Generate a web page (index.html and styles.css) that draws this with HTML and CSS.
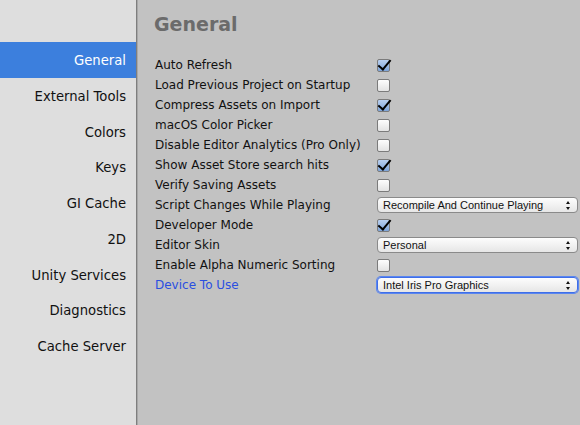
FILE: index.html
```html
<!DOCTYPE html>
<html>
<head>
<meta charset="utf-8">
<link rel="stylesheet" href="styles.css">
</head>
<body>
<div class="window">
  <nav class="sidebar">
    <div class="nav-item selected">General</div>
    <div class="nav-item">External Tools</div>
    <div class="nav-item">Colors</div>
    <div class="nav-item">Keys</div>
    <div class="nav-item">GI Cache</div>
    <div class="nav-item">2D</div>
    <div class="nav-item">Unity Services</div>
    <div class="nav-item">Diagnostics</div>
    <div class="nav-item">Cache Server</div>
  </nav>
  <main class="content">
    <h1 class="title">General</h1>
    <div class="rows">
      <div class="row"><span class="label">Auto Refresh</span><span class="cb checked"></span></div>
      <div class="row"><span class="label">Load Previous Project on Startup</span><span class="cb"></span></div>
      <div class="row"><span class="label">Compress Assets on Import</span><span class="cb checked"></span></div>
      <div class="row"><span class="label">macOS Color Picker</span><span class="cb"></span></div>
      <div class="row"><span class="label">Disable Editor Analytics (Pro Only)</span><span class="cb"></span></div>
      <div class="row"><span class="label">Show Asset Store search hits</span><span class="cb checked"></span></div>
      <div class="row"><span class="label">Verify Saving Assets</span><span class="cb"></span></div>
      <div class="row"><span class="label">Script Changes While Playing</span><span class="dd"><span class="dd-text">Recompile And Continue Playing</span><span class="dd-arrow"></span></span></div>
      <div class="row"><span class="label">Developer Mode</span><span class="cb checked"></span></div>
      <div class="row"><span class="label">Editor Skin</span><span class="dd"><span class="dd-text">Personal</span><span class="dd-arrow"></span></span></div>
      <div class="row"><span class="label">Enable Alpha Numeric Sorting</span><span class="cb"></span></div>
      <div class="row"><span class="label focus">Device To Use</span><span class="dd focused"><span class="dd-text">Intel Iris Pro Graphics</span><span class="dd-arrow"></span></span></div>
    </div>
  </main>
</div>
</body>
</html>
```
FILE: styles.css
```css
html, body {
  margin: 0;
  padding: 0;
}
body {
  font-family: "DejaVu Sans", "Liberation Sans", sans-serif;
  width: 580px;
  height: 425px;
  overflow: hidden;
  background: #c2c2c2;
}
.window {
  display: flex;
  height: 425px;
}
.sidebar {
  width: 137px;
  flex: none;
  background: #dedede;
  border-right: 1px solid #7e7e7e;
  box-shadow: 1px 0 0 #a8a8a8;
  padding-top: 42px;
  box-sizing: border-box;
}
.nav-item {
  height: 35.75px;
  line-height: 37px;
  text-align: right;
  padding-right: 10px;
  font-size: 13.2px;
  color: #111;
}
.nav-item.selected {
  background: #3c7fdd;
  color: #fff;
}
.content {
  flex: 1;
  padding-left: 18px;
  padding-right: 2px;
}
.title {
  margin: 11px 0 0 -1px;
  font-size: 19px;
  line-height: 26px;
  font-weight: bold;
  color: #6b6b6b;
  height: 44px;
}
.row {
  height: 20px;
  display: flex;
  align-items: center;
  font-size: 12px;
  color: #111;
}
.label {
  width: 222px;
  flex: none;
  white-space: nowrap;
}
.label.focus {
  color: #2a4fe0;
}
.cb {
  width: 11px;
  height: 11px;
  border: 1px solid #7b7b7b;
  border-radius: 2px;
  background: linear-gradient(#fdfdfd, #e3e3e3);
  position: relative;
}
.cb.checked {
  background: linear-gradient(#b8cff0, #7ea5da);
}
.cb.checked::after {
  content: "";
  position: absolute;
  left: 3px;
  top: -3px;
  width: 5px;
  height: 11px;
  border-right: 2.5px solid #000;
  border-bottom: 2.5px solid #000;
  transform: rotate(40deg);
  transform-origin: center;
}
.dd {
  flex: 1;
  height: 14px;
  border: 1px solid #8a8a8a;
  border-radius: 4px;
  background: linear-gradient(#fdfdfd, #e6e6e6);
  display: flex;
  align-items: center;
  justify-content: space-between;
  padding: 0 6px 0 5px;
  font-family: "Liberation Sans", sans-serif;
  font-size: 11px;
  color: #111;
}
.dd.focused {
  border-color: #3f6ee8;
  box-shadow: 0 0 0 1px #5a86f0;
}
.dd-arrow {
  width: 5px;
  height: 9px;
  position: relative;
}
.dd-arrow::before, .dd-arrow::after {
  content: "";
  position: absolute;
  left: 0;
  border-left: 2.5px solid transparent;
  border-right: 2.5px solid transparent;
}
.dd-arrow::before {
  top: 0;
  border-bottom: 3px solid #111;
}
.dd-arrow::after {
  bottom: 0;
  border-top: 3px solid #111;
}
```
